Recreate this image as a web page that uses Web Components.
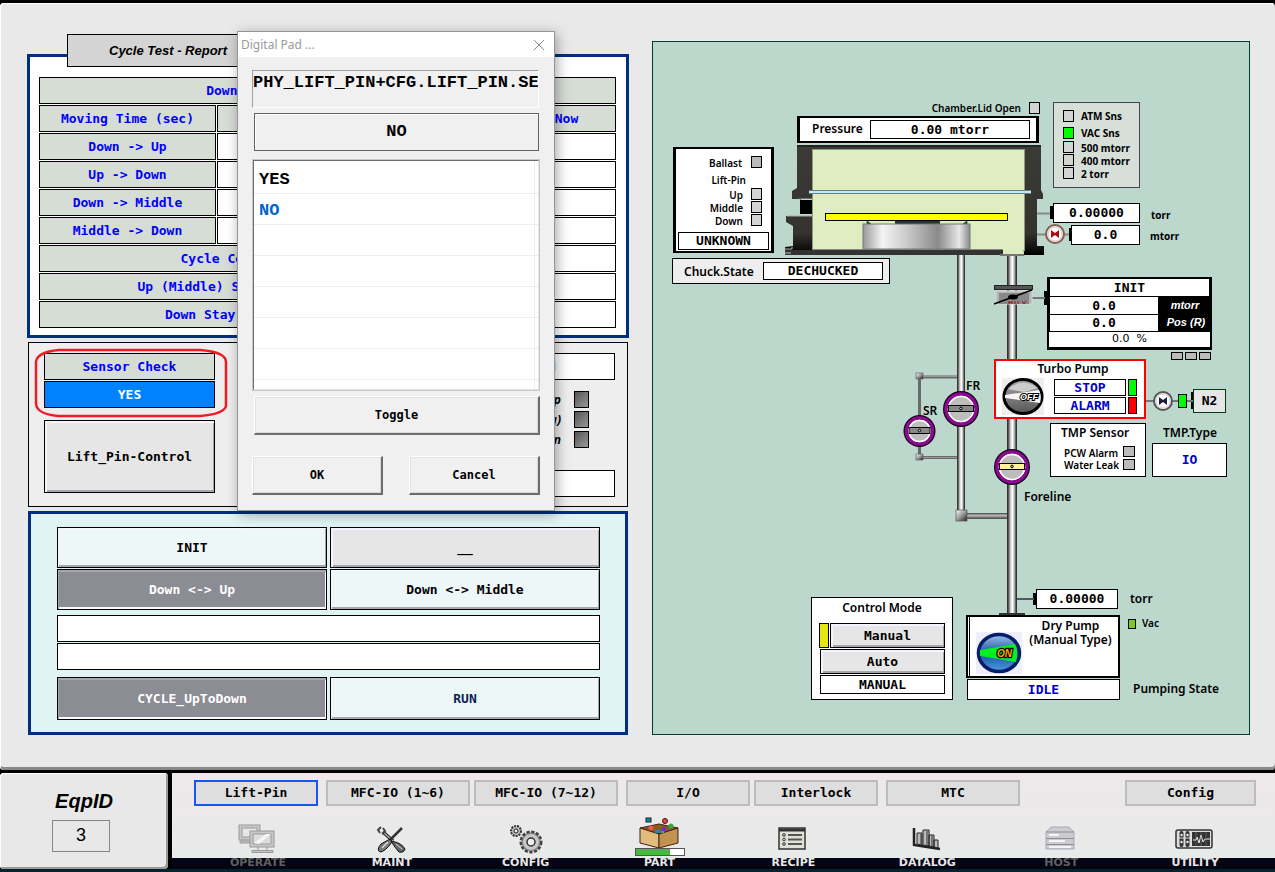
<!DOCTYPE html>
<html lang="en">
<head>
<meta charset="utf-8">
<title>Lift-Pin</title>
<style>
  html, body { margin: 0; background: #000; }
  body { min-height: 100vh; display: flex; flex-direction: column; }
  hmi-app { flex: 1; }
</style>
</head>
<body>
<hmi-app></hmi-app>
<script>
const MONO = '"DejaVu Sans Mono", monospace';
const LABEL = '"Noto Sans", sans-serif';
const SANS = '"Liberation Sans", sans-serif';

function define(name, html, init) {
  const tpl = document.createElement('template');
  tpl.innerHTML = html;
  customElements.define(name, class extends HTMLElement {
    constructor() {
      super();
      this.attachShadow({ mode: 'open' }).append(tpl.content.cloneNode(true));
    }
    connectedCallback() { if (init) init(this, this.shadowRoot); }
  });
}

/* Value display: black hairline box with centred text */
define('hmi-readout', `
<style>
  :host { display: flex; align-items: center; justify-content: center; box-sizing: border-box;
    border: 1px solid #000; background: var(--bg, #fff); color: var(--fg, #000);
    font: bold 13px/16px ${MONO}; white-space: pre; overflow: hidden; }
</style><slot></slot>`);

/* Push button with a raised bevel */
define('hmi-button', `
<style>
  :host { display: block; }
  button { width: 100%; height: 100%; box-sizing: border-box; margin: 0; padding: 0;
    border: 1px solid #000; background: var(--bg, #e6e6e6); color: var(--fg, #000);
    font: bold 13px/16px ${MONO}; white-space: pre;
    box-shadow: inset 1px 1px #f8f8fc, inset -1px -2px #a6a6ae; }
  :host([raised]) button { box-shadow: inset 2px 2px #f4f4fc, inset -1px -2px #a6a6ae; }
  :host([pressed]) button { background: #8c8c94; color: #fff;
    box-shadow: inset 1px 2px #a6a6ae, inset -1px -2px #fafaff; }
  :host([flat]) button { box-shadow: none; }
  :host([tab]) button { border: 2px solid #bcbcbc; background: #dedede; box-shadow: none; }
  :host([tab][current]) button { border-color: #1458f4; }
  :host([win]) button { border: solid; border-width: 1px 2px 2px 1px; border-color: #fff #6c6c6c #6c6c6c #fff;
    background: #f0f0f0; box-shadow: inset 1px 1px #e3e3e3, inset -1px -1px #d8d8d8; font-size: 12px; }
</style><button type="button"><slot></slot></button>`);

/* Status lamp */
define('hmi-lamp', `
<style>
  :host { display: block; box-sizing: border-box; width: 11px; height: 12px;
    border: 1px solid #000; background: var(--bg, #d4d4d4); }
</style>`);

/* Moving time report */
define('hmi-report', `
<style>
  :host { display: block; position: relative; box-sizing: border-box; border: 3px solid #002f7f;
    background: #fff; padding: 19px 9px 6px 8px; }
  h2 { position: absolute; left: 37px; top: -23px; width: 202px; height: 33px; box-sizing: border-box;
    margin: 0; border: 1px solid #000; background: #d4d4d4; text-align: center;
    font: italic bold 13px/31px ${SANS}; }
  table { width: 100%; table-layout: fixed; border-collapse: separate; border-spacing: 1px;
    font: bold 13px/16px ${MONO}; color: #00f; }
  col:first-child { width: 177px; }
  th, td { height: 27px; box-sizing: border-box; padding: 0; border: 1px solid #000; text-align: center; white-space: pre; overflow: hidden; }
  th { background: #d6ddd5; font-weight: bold; }
  td { background: #fff; }
</style>
<h2>Cycle Test - Report</h2>
<table>
  <colgroup><col><col><col><col><col></colgroup>
  <tbody>
    <tr><th colspan="5">Down &lt;-&gt; Up and Down &lt;-&gt; Middle</th></tr>
    <tr><th>Moving Time (sec)</th><th></th><th></th><th></th><th>Now</th></tr>
    <tr><th>Down -&gt; Up</th><td></td><td></td><td></td><td></td></tr>
    <tr><th>Up -&gt; Down</th><td></td><td></td><td></td><td></td></tr>
    <tr><th>Down -&gt; Middle</th><td></td><td></td><td></td><td></td></tr>
    <tr><th>Middle -&gt; Down</th><td></td><td></td><td></td><td></td></tr>
    <tr><th colspan="3">Cycle Counts</th><td colspan="2"></td></tr>
    <tr><th colspan="3">Up (Middle) Stay  (sec)</th><td colspan="2"></td></tr>
    <tr><th colspan="3">Down Stay  (sec)</th><td colspan="2"></td></tr>
  </tbody>
</table>`);

/* Sensor check and lift pin control */
define('hmi-lift', `
<style>
  :host { display: flex; justify-content: space-between; box-sizing: border-box; position: relative;
    border: 1px solid #000; background: #eee; padding: 10px 12px 9px 15px; }
  .left { width: 171px; }
  .left hmi-readout, .yes { height: 27px; }
  .yes { margin-top: 1px; --bg: #0082ff; --fg: #fff; }
  .control { height: 73px; margin-top: 12px; width: 171px; }
  .right { width: 186px; }
  .right hmi-readout { height: 27px; font: bold 12px/16px ${LABEL}; }
  ul { list-style: none; margin: 11px 26px 0 0; padding: 0; height: 79px;
    display: flex; flex-direction: column; gap: 3px; font: italic bold 12px/17px ${LABEL}; }
  li { display: flex; justify-content: flex-end; gap: 13px; }
  li hmi-lamp { width: 15px; height: 17px; --bg: linear-gradient(135deg, #555, #999); }
  .mark { position: absolute; left: 5px; top: 5px; width: 194px; height: 70px; }
</style>
<div class="left">
  <hmi-readout style="--bg:#d6ddd5;--fg:#00f">Sensor Check</hmi-readout>
  <hmi-button flat class="yes">YES</hmi-button>
  <hmi-button raised class="control">Lift_Pin-Control</hmi-button>
</div>
<div class="right">
  <hmi-readout>Lift Control</hmi-readout>
  <ul><li>Up<hmi-lamp></hmi-lamp></li><li>(Moving)<hmi-lamp></hmi-lamp></li><li>Down<hmi-lamp></hmi-lamp></li></ul>
  <hmi-readout></hmi-readout>
</div>
<svg class="mark" viewBox="0 0 194 70"><path d="M25 2H166Q192 4 192 14V58Q190 66 166 68H24Q3 66 2 56V14Q3 4 25 2Z" fill="none" stroke="#ee1c24" stroke-width="2.5"/></svg>`);

/* Cycle command buttons */
define('hmi-cycle', `
<style>
  :host { display: block; box-sizing: border-box; border: 3px solid #002f7f; background: #dff4f3; padding: 13px 25px 12px 26px; }
  .pair { display: grid; grid-template-columns: 1fr 1fr; gap: 1px 3px; }
  .pair hmi-button { height: 41px; --bg: #eef7f7; }
  .lines { display: grid; gap: 1px; margin: 5px 0 7px; }
  .lines hmi-readout { height: 27px; }
  .pair.last hmi-button { height: 43px; }
</style>
<div class="pair">
  <hmi-button>INIT</hmi-button>
  <hmi-button raised style="--bg:#e6e6e6">__</hmi-button>
  <hmi-button pressed>Down &lt;-&gt; Up</hmi-button>
  <hmi-button>Down &lt;-&gt; Middle</hmi-button>
</div>
<div class="lines"><hmi-readout></hmi-readout><hmi-readout></hmi-readout></div>
<div class="pair last">
  <hmi-button pressed>CYCLE_UpToDown</hmi-button>
  <hmi-button style="--fg:#0c2450">RUN</hmi-button>
</div>`);

/* Pop-up value selector */
define('hmi-pad', `
<style>
  :host { display: block; box-sizing: border-box; width: 318px; border: 1px solid #969696; background: #f0f0f0;
    box-shadow: 2px 3px 12px rgba(0,0,0,.35); font: bold 17px/20px "Liberation Mono", monospace; }
  header { display: flex; justify-content: space-between; align-items: center; height: 25px; padding: 0 9px 0 3px;
    background: #fff; color: #999; font: 12px/16px ${LABEL}; }
  .close { border: 0; background: none; padding: 0; width: 12px; height: 12px; display: block; }
  svg { display: block; }
  .body { padding: 13px 14px 15px; }
  .tag { height: 34px; margin-right: 1px; padding-top: 2px; border: 1px solid; border-color: #a0a0a0 #fff #fff #a0a0a0;
    overflow: hidden; white-space: pre; }
  .value { height: 38px; box-sizing: border-box; margin: 5px 1px 0 2px; border: 1px solid #646464; box-shadow: inset 1px 1px #fff;
    line-height: 36px; text-align: center; }
  ul { height: 230px; box-sizing: border-box; margin: 9px 1px 0; padding: 2px 0 0; list-style: none;
    border: 1px solid; border-color: #6c6c6c #e3e3e3 #e3e3e3 #6c6c6c; outline: 1px solid #c8c8c8;
    background: linear-gradient(#eee, #eee) right 3px top/1px 100% no-repeat #fff; overflow: hidden; }
  li { height: 31px; box-sizing: border-box; border-bottom: 1px solid #eee; padding-left: 5px; line-height: 33px; }
  li.on { color: #0064c8; }
  .toggle { height: 39px; margin: 6px 0 0 2px; }
  .foot { display: flex; justify-content: space-between; margin-top: 21px; }
  .foot hmi-button { width: 131px; height: 39px; }
</style>
<header><span>Digital Pad ...</span><button class="close" aria-label="Close"><svg width="12" height="12"><path d="M1 1L11 11M11 1L1 11" stroke="#888" fill="none"/></svg></button></header>
<div class="body">
  <div class="tag">PHY_LIFT_PIN+CFG.LIFT_PIN.SENSOR</div>
  <div class="value">NO</div>
  <ul role="listbox"><li role="option">YES</li><li role="option" class="on" aria-selected="true">NO</li><li></li><li></li><li></li><li></li><li></li><li></li></ul>
  <hmi-button win class="toggle">Toggle</hmi-button>
  <div class="foot"><hmi-button win>OK</hmi-button><hmi-button win>Cancel</hmi-button></div>
</div>`, el => { el.setAttribute('role', 'dialog'); el.setAttribute('aria-label', 'Digital Pad'); });

/* Vacuum schematic: a free canvas, its drawing coordinates start at (652, 41) */
const place = (x, y, w, h) => `left:${x - 652}px;top:${y - 41}px;` + (w ? `width:${w}px;` : '') + (h ? `height:${h}px;` : '');
const box = (x, y, w, h, css = '') => `<div class="box" style="${place(x, y, w, h)}${css}"></div>`;
const read = (x, y, w, h, t, css = '') => `<hmi-readout style="${place(x, y, w, h)}${css}">${t}</hmi-readout>`;
const lamp = (x, y, w = 11, h = 12, c = '#d4d4d4') => `<hmi-lamp style="${place(x, y, w, h)}--bg:${c}"></hmi-lamp>`;
const text = (x, cy, t, cls = '') => `<span class="t ${cls}" style="${place(x, cy - 8)}">${t}</span>`;
const textR = (x, cy, t, cls = '') => `<span class="t ${cls}" style="right:${1250 - x}px;top:${cy - 49}px">${t}</span>`;
const textC = (x, w, cy, t, cls = '') => `<span class="t c ${cls}" style="${place(x, cy - 8, w)}">${t}</span>`;
const valve = (x, y, r, c) => `<circle cx="${x}" cy="${y}" r="${r}" fill="#180018"/>
  <circle cx="${x}" cy="${y}" r="${r - 3}" fill="#fff" stroke="#8a0a92" stroke-width="3.500"/><circle cx="${x}" cy="${y}" r="${r - 5.5}" fill="#bdbdbd" stroke="#fff" stroke-width="1.500"/>
  <rect x="${x - r + 5.5}" y="${y - 3.5}" width="${2 * r - 11}" height="6" fill="${c}" stroke="#000"/><circle cx="${x}" cy="${y - 0.5}" r="1.3" fill="#ccc" stroke="#000"/>`;
const check = (x, y, c, rim) => `<circle cx="${x}" cy="${y}" r="9" fill="#f2f0ee" stroke="${rim}" stroke-width="2"/><circle cx="${x}" cy="${y}" r="7" fill="#fff" stroke="#ccc"/>
  <path d="M${x - 4} ${y - 4}L${x} ${y - 1}L${x + 4} ${y - 4}V${y + 4}L${x} ${y + 1}L${x - 4} ${y + 4}Z" fill="${c}"/>`;

define('hmi-schematic', `
<style>
  :host { display: block; position: relative; height: 694px; background: #bcd8cd; box-shadow: inset 0 0 0 1px #003c3c; overflow: hidden; }
  svg.pipes { position: absolute; left: 0; top: 0; width: 598px; height: 694px; }
  .box, hmi-readout, hmi-lamp, hmi-button, .t { position: absolute; box-sizing: border-box; }
  .box { background: #fff; border: 1px solid #000; }
  .t { font: 600 12px/16px ${LABEL}; color: #000; white-space: nowrap; }
  .s { font-size: 10px; font-weight: 700; }
  .xs { font-size: 10px; font-weight: 600; }
  .c { text-align: center; }
  .two { line-height: 14px; }
  .i { font: italic bold 11px/16px ${SANS}; color: #fff; }
  .w { font: 11px/16px "DejaVu Sans", sans-serif; }
  .icon { position: absolute; }
</style>
<svg class="pipes" viewBox="652 41 598 694">
  <defs>
    <linearGradient id="pipe"><stop offset="0" stop-color="#222"/><stop offset=".15" stop-color="#555"/><stop offset=".35" stop-color="#ccc"/><stop offset=".55" stop-color="#fff"/><stop offset=".75" stop-color="#aaa"/><stop offset=".9" stop-color="#444"/><stop offset="1" stop-color="#222"/></linearGradient>
    <linearGradient id="lie" x2="0" y2="1"><stop offset="0" stop-color="#444"/><stop offset=".4" stop-color="#bbb"/><stop offset="1" stop-color="#444"/></linearGradient>
    <linearGradient id="ped"><stop offset="0" stop-color="#999"/><stop offset=".18" stop-color="#f4f4f4"/><stop offset=".4" stop-color="#ccc"/><stop offset=".7" stop-color="#8a8a8a"/><stop offset=".9" stop-color="#e8e8e8"/><stop offset="1" stop-color="#888"/></linearGradient>
    <linearGradient id="joint" x2="1" y2="1"><stop offset="0" stop-color="#fff"/><stop offset=".5" stop-color="#999"/><stop offset="1" stop-color="#222"/></linearGradient>
    <linearGradient id="wall" x2="0" y2="1"><stop offset="0" stop-color="#3c3a36"/><stop offset=".8" stop-color="#35332f"/><stop offset="1" stop-color="#000"/></linearGradient>
  </defs>
  <path d="M957 377H919.500V457.500H957" fill="none" stroke="#666c6c" stroke-width="3"/>
  <path d="M957 376.500H920M957 457.500H920" fill="none" stroke="#999" stroke-width="1"/>
  <rect x="916" y="373" width="7" height="6" fill="url(#joint)" stroke="#555" stroke-width=".6"/>
  <rect x="916" y="454" width="7" height="6" fill="url(#joint)" stroke="#555" stroke-width=".6"/>
  <rect x="957" y="254" width="8" height="262" fill="url(#pipe)"/>
  <rect x="962" y="513" width="46" height="6" fill="url(#lie)"/>
  <rect x="956" y="510" width="11" height="11" fill="url(#joint)" stroke="#555" stroke-width=".7"/>
  <rect x="1007" y="254" width="10" height="361" fill="url(#pipe)"/>
  <path d="M999 613h26v3h-26z" fill="#333"/>
  <g>
    <path d="M797 145H1041V190L1043 194V199H1037V246H1044V255H1024V150H813V255H785V247L793 246V226L786 222V216H812V214H800V199H792V191L797 188Z" fill="url(#wall)"/>
    <path d="M799 199H813M812 216H787" fill="none" stroke="#aaa"/>
    <path d="M813 199H801V213H813" fill="#bcd8cd"/>
    <rect x="800" y="200" width="12" height="14" fill="#000"/>
    <rect x="812.500" y="149.500" width="212" height="101" fill="#dfeec0" stroke="#8c9a80"/>
    <path d="M797 145h244v2H797z" fill="#222"/>
    <path d="M785 250H1003V255H785z" fill="#333"/><path d="M812 249.500H1003" stroke="#888"/>
    <path d="M1003 249h20v5h-20z" fill="#dfeec0"/><path d="M1000 254h24v2h-24z" fill="#777"/>
    <rect x="809" y="190" width="222" height="4" fill="#778"/><rect x="809" y="191" width="222" height="2" fill="#b4f2ee"/>
    <path d="M895 220h45v5h-45z" fill="#2c3238"/><path d="M867 221l4 3h-4zM967 221l-4 3h4z" stroke="#1b6c88"/>
    <rect x="863" y="224" width="107" height="25" fill="url(#ped)" stroke="#777"/>
    <rect x="825.500" y="213.500" width="182" height="7" fill="#ff0" stroke="#000"/>
    <path d="M1037 213.500H1050M1037 234.500H1070" stroke="#888" stroke-width="2"/>
    <path d="M785 249h7v-2M785 253h6" stroke="#bbb"/>
  </g>
  <path d="M1050 206h3v13h-3zM1069 228h3v13h-3zM1044 291h4v14h-4zM1033 593h3v12h-3zM1191 392h3v17h-3z"/>
  ${check(1055, 234, '#b00c10', '#8a5c50')}
  <path d="M1031 298H1045M1146 401H1193" stroke="#707878" stroke-width="2"/>
  <path d="M1017 599H1034" stroke="#556" stroke-width="2"/>
  <rect x="996" y="291" width="36" height="13" fill="#b4b4b4" stroke="#d8d8d8"/><rect x="999" y="293" width="30" height="11" fill="#888"/>
  <rect x="994.500" y="285.500" width="38" height="4" fill="#555" stroke="#222"/>
  <path d="M1009 301v3m3-3v3m-3-1.500h3M1015 301v3m3-3v3m4-3l2 3l2-3" stroke="#a01010" fill="none"/>
  <path d="M994 304L1032 290" stroke="#000" stroke-width="1.600"/><ellipse cx="1013" cy="297" rx="5" ry="2.500"/>
  ${check(1163, 401, '#1c2038', '#555')}
  ${valve(961, 409, 18, '#888')}${valve(919.5, 431, 16, '#888')}${valve(1012, 467, 18, '#fff29a')}
</svg>
${textR(1021, 108, 'Chamber.Lid Open', 'xs')}${lamp(1029, 102)}
${box(797, 116, 242, 27, 'border-width:2px 3px')}${text(812, 129, 'Pressure')}${read(870, 120, 160, 19, '0.00 mtorr')}
${box(1053, 102, 87, 86, 'background:#d6dfd8;border-color:#445')}
${lamp(1063, 110)}${lamp(1063, 127, 11, 12, '#0f0')}${lamp(1063, 141)}${lamp(1063, 154)}${lamp(1063, 167)}
${text(1081, 116, 'ATM Sns', 's')}${text(1081, 133, 'VAC Sns', 's')}${text(1081, 148, '500 mtorr', 's')}${text(1081, 161, '400 mtorr', 's')}${text(1081, 174, '2 torr', 's')}
${box(673, 147, 101, 106, 'border-width:2px 3px')}
${textR(742, 163, 'Ballast', 'xs')}${textR(746, 180, 'Lift-Pin', 'xs')}${textR(743, 195, 'Up', 'xs')}${textR(743, 208, 'Middle', 'xs')}${textR(743, 221, 'Down', 'xs')}
${lamp(751, 156, 11, 12, '#bbb')}${lamp(751, 188)}${lamp(751, 201)}${lamp(751, 214)}
${read(678, 232, 91, 18, 'UNKNOWN')}
${box(672, 258, 218, 26, 'background:#eee')}${text(684, 272, 'Chuck.State')}${read(763, 262, 120, 18, 'DECHUCKED')}
${read(1053, 203, 87, 20, '0.00000')}${text(1151, 215, 'torr', 's')}
${read(1071, 225, 69, 20, '0.0')}${text(1150, 236, 'mtorr', 's')}
${box(1047, 277, 165, 73, 'border-width:3px 2px;background:#000')}
${read(1049, 278, 161, 19, 'INIT')}${read(1049, 296, 110, 19, '0.0')}${read(1049, 314, 110, 18, '0.0')}
${box(1049, 332, 161, 15, 'border:0')}${textC(1049, 161, 339, '0.0 &nbsp;%', 'w')}
${textC(1160, 50, 305, 'mtorr', 'i')}${textC(1160, 52, 322, 'Pos (R)', 'i')}
${lamp(1171, 352, 12, 8, '#bbb')}${lamp(1185, 352, 12, 8, '#bbb')}${lamp(1199, 352, 12, 8, '#bbb')}
${box(994, 359, 152, 60, 'border:2px solid #f00')}${textC(996, 154, 369, 'Turbo Pump')}
<svg class="icon" style="${place(1002, 378, 42, 37)}" viewBox="0 0 42 37">
  <defs><linearGradient id="g" x2="0" y2="1"><stop offset="0" stop-color="#aaa"/><stop offset="1" stop-color="#555"/></linearGradient></defs>
  <rect width="42" height="37" fill="#eee"/><ellipse cx="21" cy="18.500" rx="19" ry="17" fill="url(#g)" stroke="#000" stroke-width="3"/>
  <path d="M6 11Q20-1 36 10L22 14Z" fill="#ccc"/><path d="M3 17L37 12Q40 18 38 25L3 20Z" fill="#f6f6f6"/>
  <text x="18" y="22" font-family="Liberation Sans, sans-serif" font-size="9" font-weight="bold" font-style="italic" stroke="#000" stroke-width="2" paint-order="stroke" fill="#fff">OFF</text>
</svg>
${read(1054, 379, 72, 17, 'STOP', '--fg:#00c')}${read(1054, 397, 72, 17, 'ALARM', '--fg:#00c')}${lamp(1128, 379, 9, 17, '#0f0')}${lamp(1128, 397, 9, 17, '#f00')}
${lamp(1178, 394, 9, 14, '#0f0')}${read(1193, 389, 33, 24, 'N2', '--bg:#e6e6e6;border-color:#043c10')}
${box(1050, 423, 96, 54)}${text(1061, 433, 'TMP Sensor')}${text(1064, 453, 'PCW Alarm', 'xs')}${text(1064, 465, 'Water Leak', 'xs')}
${lamp(1123, 446, 12, 11, '#bbb')}${lamp(1123, 459, 12, 11, '#bbb')}
${text(1163, 433, 'TMP.Type')}${read(1152, 443, 75, 34, 'IO', '--fg:#00c')}
${text(966, 386, 'FR')}${text(923, 411, 'SR')}${text(1024, 497, 'Foreline')}
${read(1036, 589, 82, 20, '0.00000')}${text(1130, 599, 'torr')}
${box(966, 615, 154, 63, 'border-width:2px')}${box(969, 617, 1, 59, 'border-width:0 0 0 1px')}
${textC(1025, 91, 627, 'Dry Pump<br>(Manual Type)', 'two')}
<svg class="icon" style="${place(976, 632, 46, 42)}" viewBox="0 0 46 42">
  <defs><linearGradient id="b" x2="0" y2="1"><stop offset="0" stop-color="#9cc4ec"/><stop offset=".5" stop-color="#1c50a0"/><stop offset="1" stop-color="#4a9ce8"/></linearGradient></defs>
  <rect width="46" height="42" fill="#eef"/><ellipse cx="23" cy="21" rx="20.500" ry="18.500" fill="url(#b)" stroke="#081c68" stroke-width="3.500"/>
  <path d="M4 18L39 12Q43 20 40 30L4 24Z" fill="#00f020"/>
  <text x="21" y="25" font-family="Liberation Sans, sans-serif" font-size="10" font-weight="bold" font-style="italic" stroke="#000" stroke-width="2.500" paint-order="stroke" fill="#f8a800">ON</text>
</svg>
${read(967, 679, 153, 21, 'IDLE', '--fg:#00c')}${text(1133, 689, 'Pumping State')}
${lamp(1128, 619, 8, 10, '#7c2')}${text(1142, 623, 'Vac', 'xs')}
${box(811, 597, 142, 103)}${textC(811, 142, 608, 'Control Mode')}
${lamp(819, 623, 10, 25, '#e6e614')}
<hmi-button raised style="${place(830, 623, 115, 25)}">Manual</hmi-button>
<hmi-button raised style="${place(820, 649, 125, 25)}">Auto</hmi-button>
${read(820, 675, 125, 19, 'MANUAL')}`);

/* Main navigation entry */
const ICONS = {
  operate: `<g stroke="#999" fill="#c8c8c8"><rect x="7" y="6" width="21" height="15"/><path d="M10 9h15v9H10z" fill="#e6e6e6"/><path d="M8 22h20v2H8z"/><rect x="18" y="12" width="24" height="16"/><path d="M21 15h18v10H21z" fill="#ddd"/><path d="M22 24l12-9h5l-12 10z" fill="#f6f6f6" stroke="none"/><path d="M26 28v3m9-3v3M20 31.500h21v2H20z"/></g>`,
  maint: `<path d="M17 13L27 22" stroke="#222" stroke-width="3.500"/><path d="M17 13L27 22" stroke="#aaa" stroke-width="1.500"/><path d="M14 14L12 11L15 8M17 9L19 12L16 15" fill="none" stroke="#444" stroke-width="2"/><path d="M36 9L24 21" stroke="#333" stroke-width="2.500"/><path d="M24 20L15 25Q10 31 14 33Q19 33 26 23Z" fill="#777" stroke="#111"/><path d="M16 29L22 23" stroke="#ddd" stroke-width="1.500"/><path d="M25 22Q36 24 39 30Q38 34 33 33Q29 29 25 22Z" fill="#666" stroke="#111"/><path d="M30 25L36 30" stroke="#ddd"/>`,
  config: `<g transform="translate(2 0)"><circle cx="14" cy="12" r="5" fill="#bbb" stroke="#333" stroke-width="2" stroke-dasharray="2 1"/><circle cx="14" cy="12" r="2" fill="#eee" stroke="#222"/><circle cx="29" cy="23" r="10" fill="#aaa" stroke="#444" stroke-width="3" stroke-dasharray="3.200 1.500"/><circle cx="29" cy="23" r="8.500" fill="#c8c8c8" stroke="#888"/><circle cx="29" cy="23" r="4" fill="#eee" stroke="#333" stroke-width="1.500"/></g>`,
  part: `<path d="M6 9L25 5L44 9L26 15Z" fill="#8a5a20" stroke="#421"/><path d="M6 9L25 15V29L6 24Z" fill="#e2bc7c" stroke="#421"/><path d="M25 15L44 9V24L25 29Z" fill="#c09450" stroke="#421"/><rect x="12" y="-1" width="5" height="4" fill="#088ca8" stroke="#222"/><circle cx="31" cy="2" r="2.500" fill="#e44" stroke="#411"/><circle cx="17" cy="9" r="2.500" fill="#e54"/><circle cx="37" cy="7" r="2.500" fill="#3a4"/><rect x="28" y="8" width="4" height="4" fill="#63c"/><rect x="21" y="11" width="5" height="3" fill="#28b"/><path d="M27 14h3v-2h-3z" fill="#4a5"/><rect x="1.500" y="29.500" width="49" height="7" fill="#fff" stroke="#555"/><rect x="2" y="30" width="34" height="6" fill="#48b840"/>`,
  recipe: `<rect x="12" y="9" width="26" height="21" fill="#e0e0d8" stroke="#333" stroke-width="1.500"/><path d="M12 11h26" stroke="#333" stroke-width="3"/><path d="M21 16h14M21 20.500h14M21 25h14" stroke="#555" stroke-width="2"/><g fill="none" stroke="#333"><circle cx="17" cy="16" r="1.300"/><circle cx="17" cy="20.500" r="1.300"/><circle cx="17" cy="25" r="1.300"/></g>`,
  datalog: `<g transform="translate(2 0)"><path d="M11 9V26L37 30" fill="none" stroke="#222" stroke-width="2.500"/><g fill="#bbb" stroke="#222"><path d="M14 14h5v12l-5-1zM20 11h6v16l-6-1zM26 16h5v12l-5-1zM31 21h4v8l-4-1z"/></g><path d="M18 15v10M24 12v14M29 17v10" stroke="#333"/></g>`,
  host: `<path d="M16 8H34L39 13V30H11V13Z" fill="#ccccd0" stroke="#aab"/><path d="M11 13H39M11 19.500H39M11 25.500H39" stroke="#8c8c94"/><path d="M14 16h10M14 22h16M14 28h22" stroke="#f4f4f4" stroke-width="2"/>`,
  utility: `<rect x="7" y="11" width="36" height="18" rx="2" fill="#ddd" stroke="#333" stroke-width="1.500"/><rect x="23" y="13" width="18" height="14" fill="#333"/><path d="M24 21h3l1-3 2 6 2-8 2 7 2-3h5" stroke="#eee" fill="none"/><path d="M27 13v14M32 13v14M37 13v14" stroke="#777" stroke-width=".6"/><path d="M12.500 14v12M18.500 14v12" stroke="#333" stroke-width="4" stroke-linecap="round"/><path d="M10 19h5M16 19h5" stroke="#ddd"/><circle cx="12.500" cy="16" r="1.200" fill="#eee"/><circle cx="18.500" cy="16" r="1.200" fill="#eee"/><circle cx="12.500" cy="23" r="1.200" fill="#eee"/><circle cx="18.500" cy="23" r="1.200" fill="#eee"/>`
};
define('hmi-nav-item', `
<style>
  :host { display: block; color: #e8e8e8; }
  :host([off]) { color: #606060; }
  a { display: flex; flex-direction: column; align-items: center; text-decoration: none; color: inherit;
    font: bold 11px/12px "DejaVu Sans", sans-serif; }
  svg { display: block; width: 52px; height: 38px; overflow: visible; }
</style><a href="#"><svg viewBox="0 0 52 38" aria-hidden="true"></svg><slot></slot></a>`, (el, root) => {
  root.querySelector('svg').innerHTML = ICONS[el.getAttribute('icon')];
});

define('hmi-footer', `
<style>
  :host { display: flex; gap: 4px; background: #000; border-bottom: 3px solid #06222c; }
  .eqp { width: 168px; height: 96px; box-sizing: border-box; padding-top: 16px; background: #e8e8e8; border-radius: 4px;
    box-shadow: inset 1px 1px #fff, inset -2px -2px #999; display: flex; flex-direction: column; align-items: center; gap: 7px; }
  h1 { margin: 0; font: italic bold 20px/24px ${SANS}; }
  .id { width: 58px; height: 32px; box-sizing: border-box; border: 1px solid #888; text-align: center; font: 18px/29px ${SANS};
    margin-right: 6px; }
  nav { flex: 1; min-width: 0; box-sizing: border-box; height: 96px; padding-top: 7px; display: flex; flex-direction: column; justify-content: space-between;
    background: linear-gradient(#eee8ea, #e8eaea) top/100% 85px no-repeat #040414; }
  .tabs { display: flex; gap: 8px; padding: 0 19px 0 22px; }
  .tabs hmi-button { width: 124px; height: 26px; }
  .tabs .near { margin-left: -4px; }
  .tabs .wide { width: 144px; }
  .tabs .mid { width: 134px; }
  .tabs .end { width: 131px; margin-left: auto; }
  .items { display: grid; grid-template-columns: repeat(8, 1fr); padding: 0 13px 0 19px; }
</style>
<div class="eqp"><h1>EqpID</h1><div class="id">3</div></div>
<nav>
  <div class="tabs">
    <hmi-button tab current>Lift-Pin</hmi-button>
    <hmi-button tab class="wide">MFC-IO (1~6)</hmi-button>
    <hmi-button tab class="wide near">MFC-IO (7~12)</hmi-button>
    <hmi-button tab>I/O</hmi-button>
    <hmi-button tab class="near">Interlock</hmi-button>
    <hmi-button tab class="mid">MTC</hmi-button>
    <hmi-button tab class="end">Config</hmi-button>
  </div>
  <div class="items">
    <hmi-nav-item icon="operate" off>OPERATE</hmi-nav-item>
    <hmi-nav-item icon="maint">MAINT</hmi-nav-item>
    <hmi-nav-item icon="config">CONFIG</hmi-nav-item>
    <hmi-nav-item icon="part">PART</hmi-nav-item>
    <hmi-nav-item icon="recipe">RECIPE</hmi-nav-item>
    <hmi-nav-item icon="datalog">DATALOG</hmi-nav-item>
    <hmi-nav-item icon="host" off>HOST</hmi-nav-item>
    <hmi-nav-item icon="utility">UTILITY</hmi-nav-item>
  </div>
</nav>`);

define('hmi-app', `
<style>
  :host { display: flex; flex-direction: column; background: #000; }
  main { flex: 1; position: relative; display: grid; grid-template-columns: minmax(0, 1fr) 598px; gap: 24px; align-items: start;
    box-sizing: border-box; margin: 3px 0; padding: 38px 25px 32px 28px; background: #e9e9e9; border-radius: 4px;
    box-shadow: inset 1px 1px #fff, inset 0 -3px #888; }
  .col { display: flex; flex-direction: column; gap: 4px; margin-top: 13px; }
  hmi-report { margin: 0 -1px; }
  hmi-pad { position: absolute; left: 237px; top: 28px; }
</style>
<main>
  <div class="col"><hmi-report></hmi-report><hmi-lift></hmi-lift><hmi-cycle></hmi-cycle></div>
  <hmi-schematic></hmi-schematic>
  <hmi-pad></hmi-pad>
</main>
<hmi-footer></hmi-footer>`);
</script>
</body>
</html>
